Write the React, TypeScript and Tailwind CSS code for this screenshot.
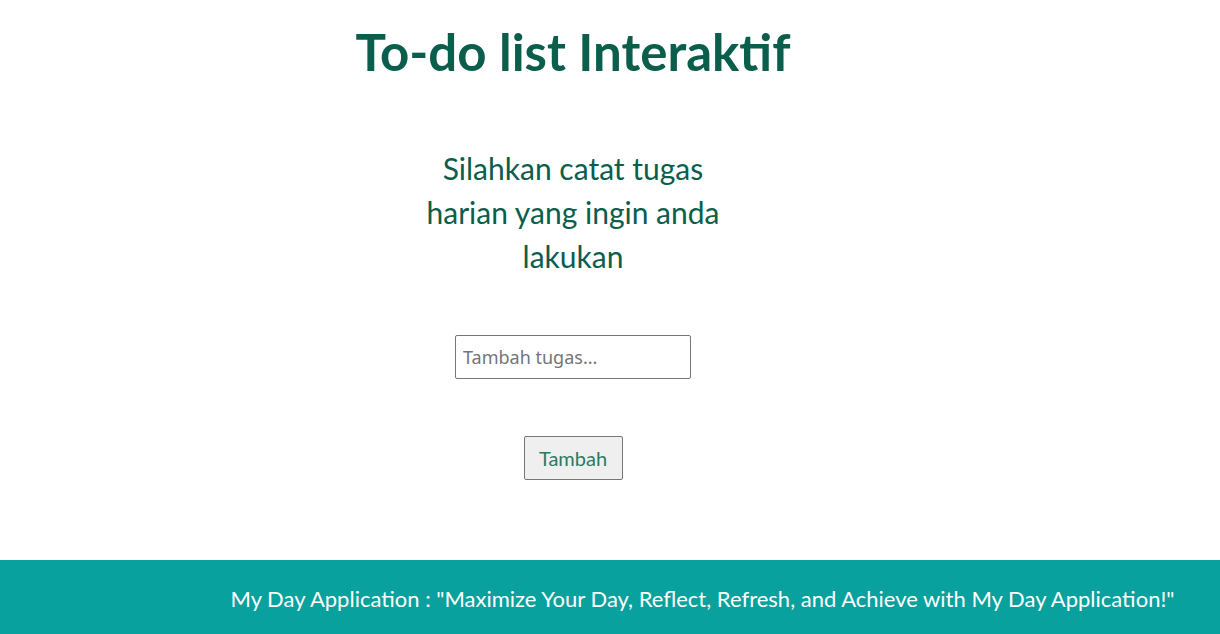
export default function App() {
  return (
    <div className="min-h-[634px] bg-white flex flex-col font-['Lato',sans-serif]">
      <main className="w-[1146px] flex flex-col items-center text-center">
        <h1 className="mt-[22px] leading-[60px] text-[51px] font-bold text-[#0b5d4c]">
          To-do list Interaktif
        </h1>
        <p className="mt-[64px] text-[30px] leading-[44px] text-[#0b5d4c]">
          Silahkan catat tugas
          <br />
          harian yang ingin anda
          <br />
          lakukan
        </p>
        <input
          type="text"
          placeholder="Tambah tugas..."
          className="mt-[57px] w-[236px] h-[44px] border border-[#767676] rounded-[2px] px-[7px] text-[18px] font-['Noto_Sans',sans-serif] placeholder:text-[#757575] outline-none"
        />
        <button
          type="button"
          className="mt-[57px] w-[99px] h-[44px] bg-[#efefef] border border-[#767676] rounded-[2px] text-[20px] text-[#2b7a66]"
        >
          Tambah
        </button>
      </main>
      <footer className="mt-[80px] h-[74px] bg-[#08a19d] flex items-center justify-center pl-[185px] pt-[3px]">
        <p className="text-[22px] text-white">
          My Day Application : "Maximize Your Day, Reflect, Refresh, and Achieve with My Day Application!"
        </p>
      </footer>
    </div>
  );
}
